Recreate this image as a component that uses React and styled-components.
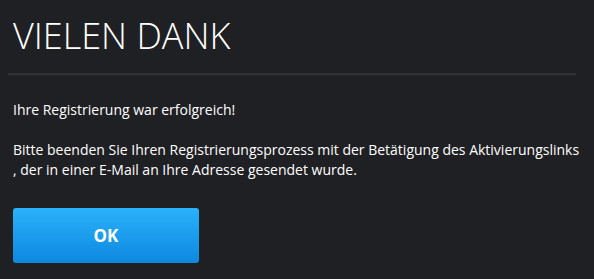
import React from "react";
import styled, { createGlobalStyle } from "styled-components";

const Global = createGlobalStyle`
  html, body { margin: 0; padding: 0; background: #1f2023; }
  body { font-family: "Open Sans", "Liberation Sans", sans-serif; }
`;

const Page = styled.div`
  width: 594px;
  height: 279px;
  background: #1f2023;
  box-sizing: border-box;
  padding: 0 8px;
  overflow: hidden;
`;

const Title = styled.h1`
  margin: 0;
  padding: 14px 0 0 5px;
  font-family: "Open Sans", sans-serif;
  font-weight: 300;
  font-size: 36px;
  line-height: 44px;
  color: #ffffff;
  letter-spacing: 0;
`;

const Divider = styled.hr`
  margin: 15px 10px 0 0;
  border: 0;
  height: 1px;
  background: #2b2d31;
  border-bottom: 1px solid #36383c;
`;

const Body = styled.div`
  display: flex;
  flex-direction: column;
  gap: 20px;
  padding: 25px 0 0 5px;
  color: #ffffff;
  font-size: 14px;
  line-height: 20px;
`;

const Para = styled.p`
  margin: 0;
  white-space: nowrap;
`;

const Button = styled.button`
  display: flex;
  align-items: center;
  justify-content: center;
  width: 186px;
  height: 55px;
  margin: 28px 0 0 5px;
  border: 0;
  border-radius: 3px;
  background: linear-gradient(to bottom, #2ab2fb, #0d88df);
  color: #ffffff;
  font-family: "Open Sans", sans-serif;
  font-weight: 700;
  font-size: 17px;
  cursor: pointer;
`;

export default function App() {
  return (
    <>
      <Global />
      <Page>
        <Title>VIELEN DANK</Title>
        <Divider />
        <Body>
          <Para>Ihre Registrierung war erfolgreich!</Para>
          <Para>
            Bitte beenden Sie Ihren Registrierungsprozess mit der Betätigung des Aktivierungslinks
            <br />, der in einer E-Mail an Ihre Adresse gesendet wurde.
          </Para>
        </Body>
        <Button>OK</Button>
      </Page>
    </>
  );
}
